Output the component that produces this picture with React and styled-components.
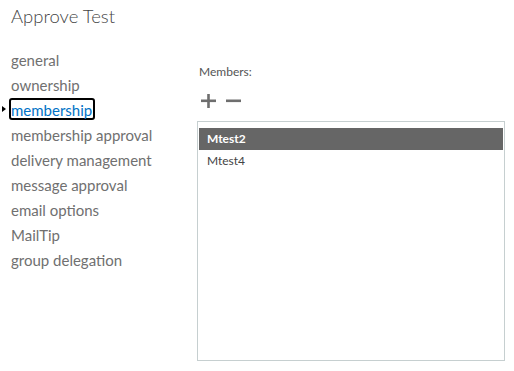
import React from "react";
import styled, { createGlobalStyle } from "styled-components";

const GlobalStyle = createGlobalStyle`
  html, body {
    margin: 0;
    padding: 0;
    background: #fff;
  }
  body {
    font-family: Lato, "Open Sans", sans-serif;
  }
`;

const Page = styled.div`
  width: 514px;
  height: 371px;
  overflow: hidden;
  box-sizing: border-box;
  padding: 3px 0 0 0;
`;

const Title = styled.h1`
  margin: 0 0 0 11px;
  font-size: 18.5px;
  line-height: 26px;
  font-weight: 300;
  color: #444;
`;

const Body = styled.div`
  display: grid;
  grid-template-columns: 197px 308px;
  margin-top: 17px;
`;

const Nav = styled.ul`
  list-style: none;
  margin: 0;
  padding: 0 0 0 2px;
`;

const NavItem = styled.li`
  display: flex;
  align-items: center;
  height: 25px;
`;

const Marker = styled.span`
  width: 7px;
  flex: none;
  display: flex;
  align-items: center;
  &::before {
    content: "";
    display: ${(p) => (p.$show ? "block" : "none")};
    border-left: 4px solid #000;
    border-top: 3px solid transparent;
    border-bottom: 3px solid transparent;
    margin-top: 1px;
  }
`;

const NavLabel = styled.span`
  display: inline-block;
  font-size: 15px;
  line-height: 16px;
  padding: 2px 1px 0 0;
  border: 2px solid ${(p) => (p.$active ? "#000" : "transparent")};
  border-radius: 3px;
  color: ${(p) => (p.$active ? "#0072c6" : "#707070")};
  white-space: nowrap;
`;

const Panel = styled.div`
  display: flex;
  flex-direction: column;
  padding-top: 18px;
`;

const Label = styled.div`
  font-size: 12px;
  line-height: 16px;
  color: #555;
  margin-left: 2px;
`;

const Toolbar = styled.div`
  display: flex;
  align-items: center;
  gap: 10px;
  margin: 14px 0 0 4px;
  height: 14px;
`;

const IconButton = styled.button`
  border: 0;
  background: none;
  padding: 0;
  width: 15px;
  height: 14px;
  display: flex;
  cursor: pointer;
`;

const ListBox = styled.div`
  margin-top: 13px;
  height: 240px;
  box-sizing: border-box;
  border: 1px solid #c6cfd0;
  padding: 6px 1px 0 1px;
`;

const Row = styled.div`
  height: 22px;
  line-height: 22px;
  padding-left: 8px;
  font-size: 12px;
  font-weight: ${(p) => (p.$selected ? 700 : 400)};
  background: ${(p) => (p.$selected ? "#666" : "transparent")};
  color: ${(p) => (p.$selected ? "#fff" : "#444")};
`;

const Plus = () => (
  <svg width="15" height="14" viewBox="0 0 15 14">
    <rect x="0" y="5.5" width="15" height="2.6" fill="#6e6e6e" />
    <rect x="6.2" y="0" width="2.6" height="14" fill="#6e6e6e" />
  </svg>
);

const Minus = () => (
  <svg width="15" height="14" viewBox="0 0 15 14">
    <rect x="0" y="5.5" width="15" height="2.6" fill="#6e6e6e" />
  </svg>
);

const sections = [
  "general",
  "ownership",
  "membership",
  "membership approval",
  "delivery management",
  "message approval",
  "email options",
  "MailTip",
  "group delegation",
];

const members = ["Mtest2", "Mtest4"];

export default function App() {
  const active = "membership";
  return (
    <Page>
      <GlobalStyle />
      <Title>Approve Test</Title>
      <Body>
        <Nav>
          {sections.map((s) => (
            <NavItem key={s}>
              <Marker $show={s === active} />
              <NavLabel $active={s === active}>{s}</NavLabel>
            </NavItem>
          ))}
        </Nav>
        <Panel>
          <Label>Members:</Label>
          <Toolbar>
            <IconButton aria-label="add">
              <Plus />
            </IconButton>
            <IconButton aria-label="remove">
              <Minus />
            </IconButton>
          </Toolbar>
          <ListBox>
            {members.map((m, i) => (
              <Row key={m} $selected={i === 0}>
                {m}
              </Row>
            ))}
          </ListBox>
        </Panel>
      </Body>
    </Page>
  );
}
